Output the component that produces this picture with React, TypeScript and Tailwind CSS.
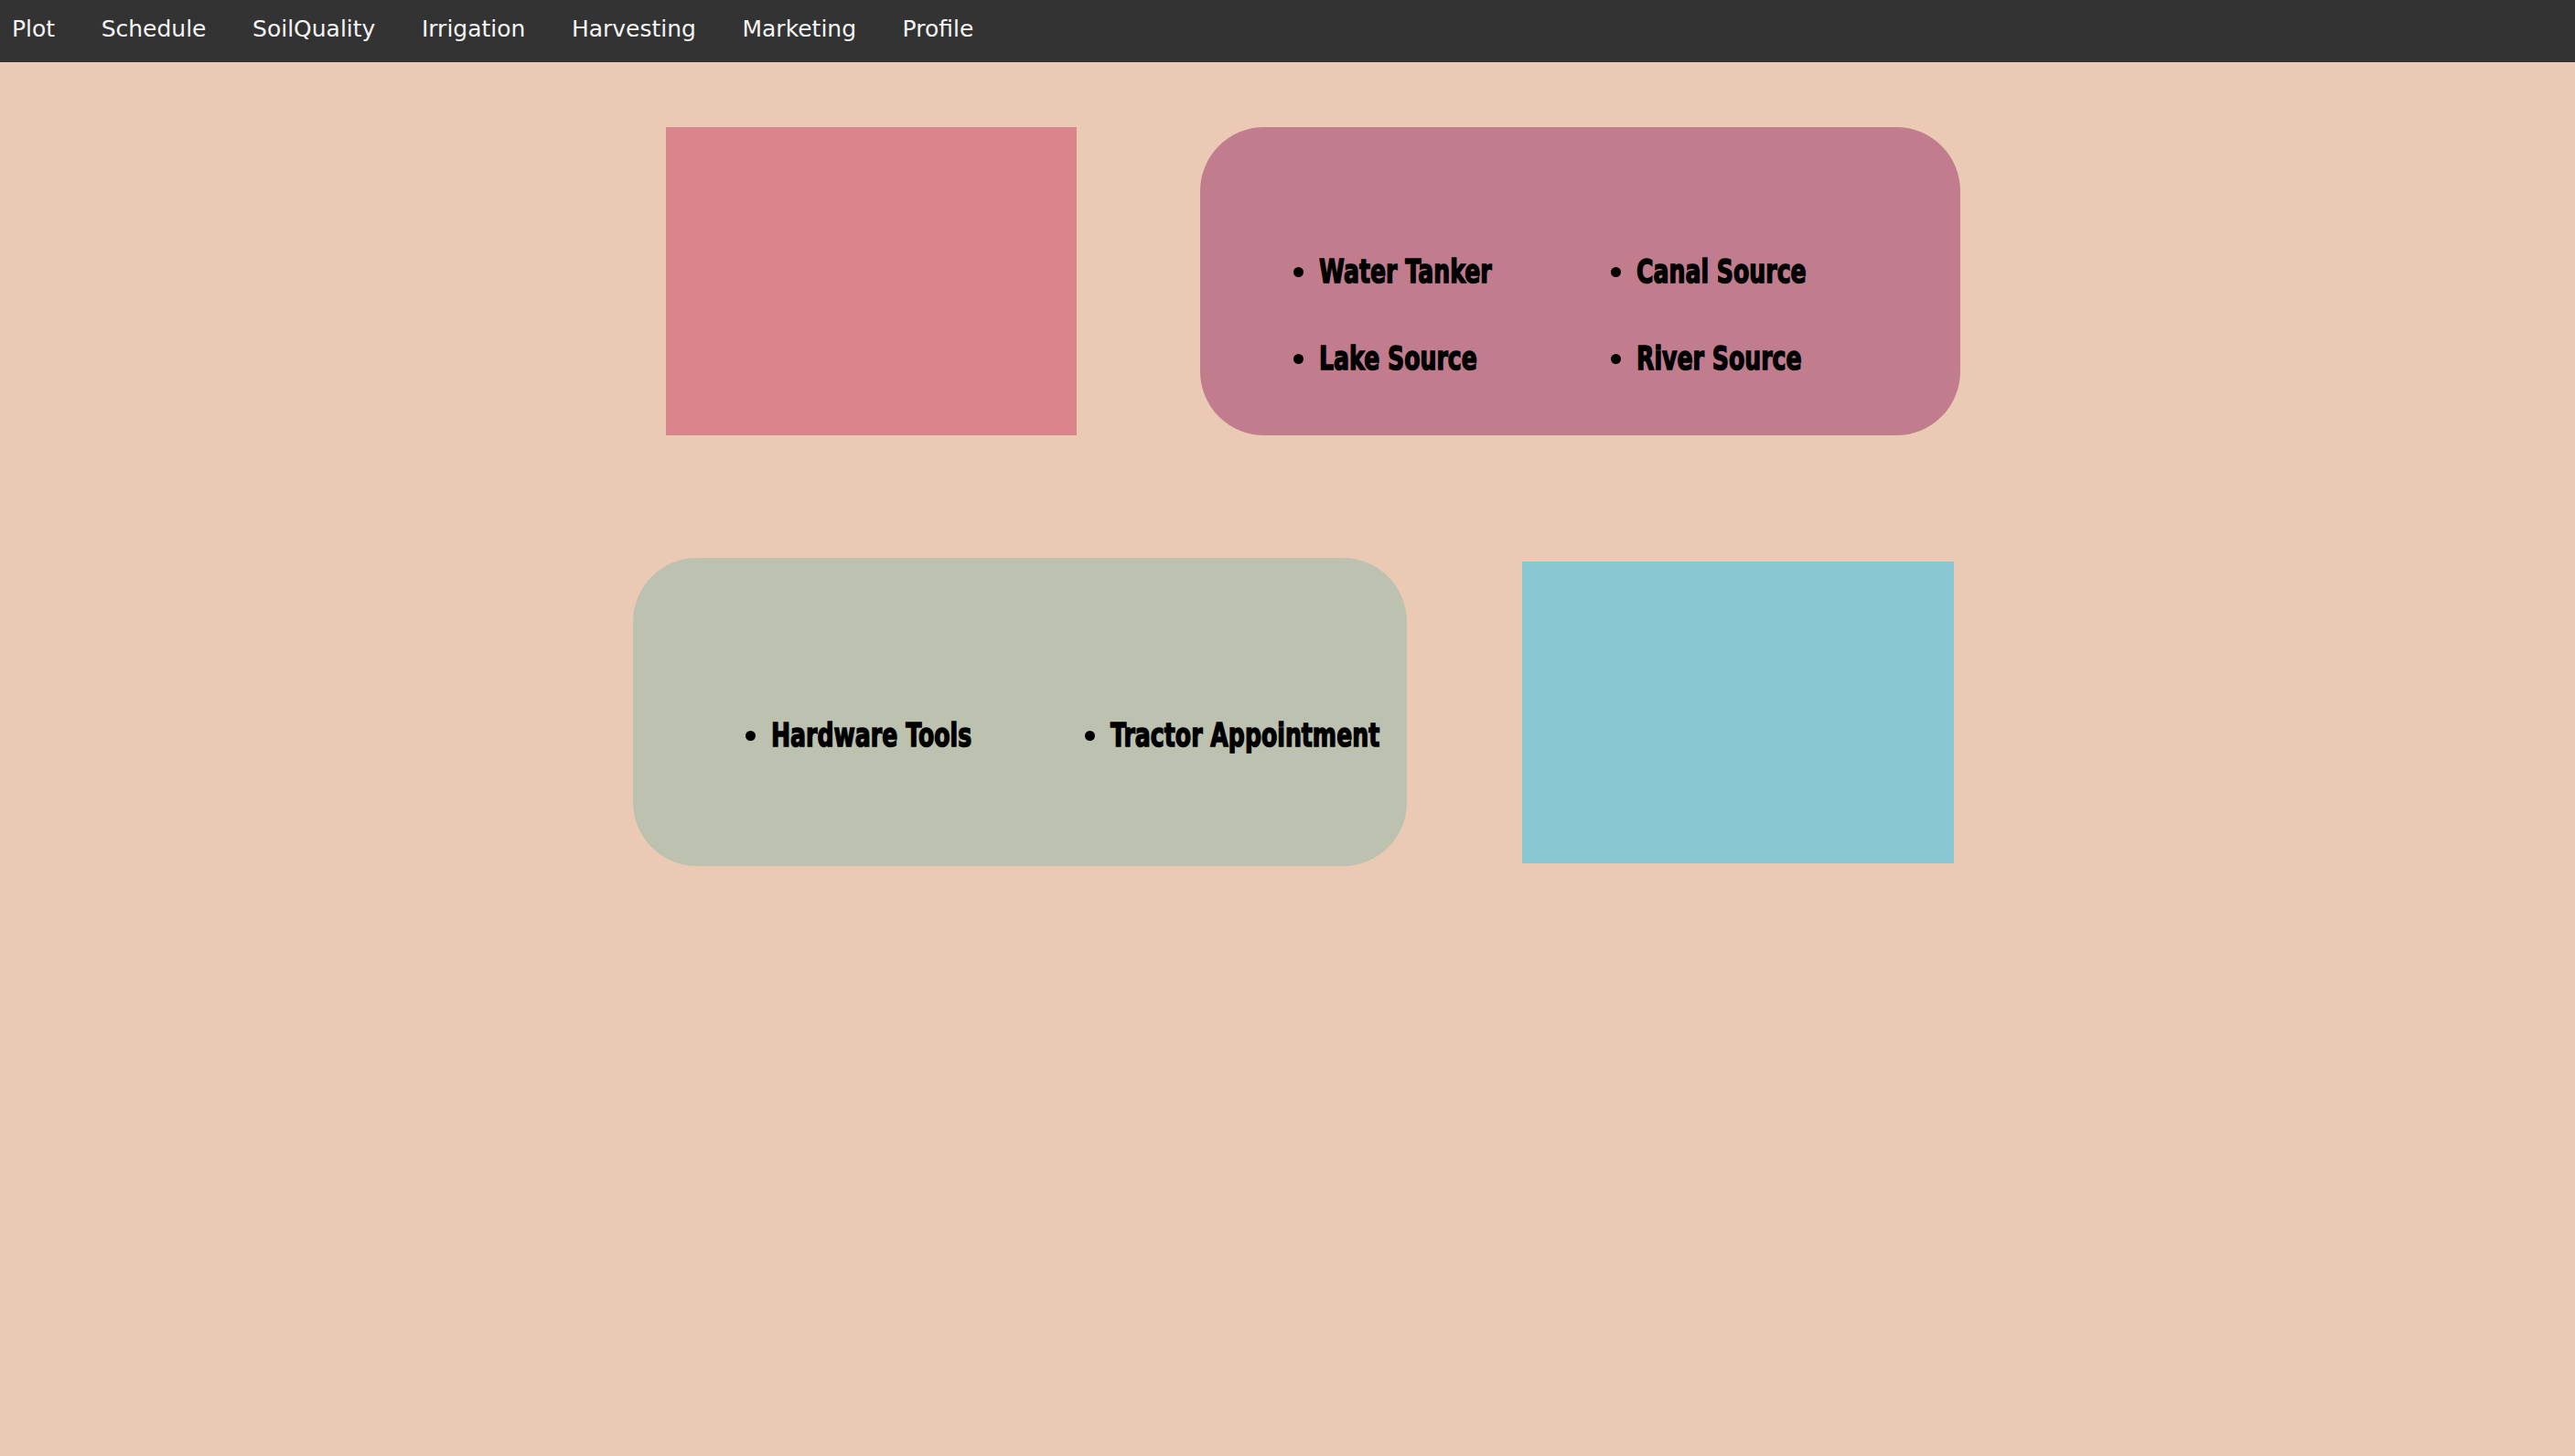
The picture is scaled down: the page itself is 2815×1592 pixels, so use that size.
const navLinks = [
  "Plot",
  "Schedule",
  "SoilQuality",
  "Irrigation",
  "Harvesting",
  "Marketing",
  "Profile",
];

const waterSources = ["Water Tanker", "Canal Source", "Lake Source", "River Source"];

const equipment = ["Hardware Tools", "Tractor Appointment"];

// no Impact in the sandbox: squeeze a heavy sans to get its narrow look
const listFont = {
  fontFamily: 'Impact, "DejaVu Sans", sans-serif',
};

function ListPoint({ label }: { label: string }) {
  return (
    <li className="flex items-center gap-[17px] whitespace-nowrap text-[35px] font-bold leading-[40px] text-black">
      <span className="h-[11px] w-[11px] shrink-0 rounded-full bg-black" />
      <span className="inline-block origin-left scale-x-[0.72] [-webkit-text-stroke:1.5px_black]">
        {label}
      </span>
    </li>
  );
}

export default function App() {
  return (
    <div className="min-h-[1592px] w-full bg-[#ebcab5]">
      <nav
        className="flex h-[68px] items-start gap-[50.5px] bg-[#333333] pl-[13px] pt-[17px] text-[25px] leading-[29px] text-[#f5f5f5]"
        style={{ fontFamily: '"DejaVu Sans", Verdana, sans-serif' }}
      >
        {navLinks.map((link) => (
          <a key={link} href="#">
            {link}
          </a>
        ))}
      </nav>

      <section className="flex flex-row items-start gap-[135px] pl-[728px] pt-[71px]">
        <div className="h-[337px] w-[449px] bg-[#d9858b]" />

        <div className="h-[337px] w-[831px] rounded-[70px] bg-[#c17d8e] pl-[102px] pt-[138px]">
          <ul className="grid grid-cols-[347px_auto] gap-y-[55px]" style={listFont}>
            {waterSources.map((item) => (
              <ListPoint key={item} label={item} />
            ))}
          </ul>
        </div>
      </section>

      <section className="flex flex-row items-center gap-[126px] pl-[692px] pt-[134px]">
        <div className="h-[337px] w-[846px] rounded-[70px] bg-[#bdc1af] pl-[123px] pt-[174px]">
          <ul className="grid grid-cols-[371px_auto]" style={listFont}>
            {equipment.map((item) => (
              <ListPoint key={item} label={item} />
            ))}
          </ul>
        </div>

        <div className="h-[330px] w-[472px] bg-[#89c7d2]" />
      </section>
    </div>
  );
}
